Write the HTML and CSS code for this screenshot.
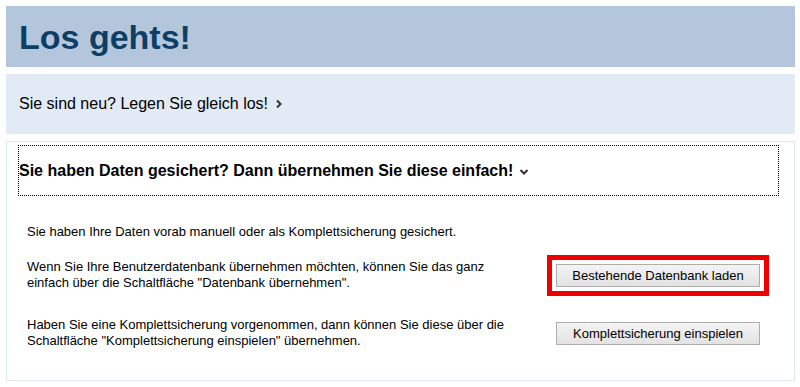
FILE: index.html
```html
<!DOCTYPE html>
<html lang="de">
<head>
<meta charset="utf-8">
<title>Los gehts!</title>
<link rel="stylesheet" href="styles.css">
</head>
<body>
  <header class="hero">
    <h1 class="hero-title">Los gehts!</h1>
  </header>
  <div class="newbar">
    <span>Sie sind neu? Legen Sie gleich los!</span>
    <svg class="chev" width="8" height="10" viewBox="0 0 8 10"><path d="M2 1.5 L5.5 5 L2 8.5" fill="none" stroke="#333" stroke-width="2"/></svg>
  </div>
  <section class="panel">
    <div class="panel-head">
      <span>Sie haben Daten gesichert? Dann übernehmen Sie diese einfach!</span>
      <svg class="chev-down" width="10" height="8" viewBox="0 0 10 8"><path d="M1.5 2 L5 5.5 L8.5 2" fill="none" stroke="#333" stroke-width="2"/></svg>
    </div>
    <div class="panel-body">
      <p class="intro">Sie haben Ihre Daten vorab manuell oder als Komplettsicherung gesichert.</p>
      <div class="row row-db">
        <p class="row-text">Wenn Sie Ihre Benutzerdatenbank übernehmen möchten, können Sie das ganz einfach über die Schaltfläche "Datenbank übernehmen".</p>
        <button class="btn btn-marked">Bestehende Datenbank laden</button>
      </div>
      <div class="row row-full">
        <p class="row-text">Haben Sie eine Komplettsicherung vorgenommen, dann können Sie diese über die Schaltfläche "Komplettsicherung einspielen" übernehmen.</p>
        <button class="btn">Komplettsicherung einspielen</button>
      </div>
    </div>
  </section>
</body>
</html>
```
FILE: styles.css
```css
html, body {
  background: #ffffff;
}
body {
  margin: 6px 5px 6px 6px;
  font-family: "Liberation Sans", Arial, sans-serif;
  color: #000;
}
.hero {
  height: 61px;
  background: #b4c6dc;
  display: flex;
  align-items: center;
  padding-left: 13px;
}
.hero-title {
  margin: 0;
  font-size: 34px;
  font-weight: bold;
  color: #0d3f66;
  line-height: 1;
}
.newbar {
  margin-top: 7px;
  height: 60px;
  background: #e2eaf5;
  display: flex;
  align-items: center;
  padding-left: 13px;
  font-size: 16px;
  gap: 7px;
}
.chev {
  display: block;
}
.panel {
  margin-top: 7px;
  border: 1px solid #dfe7f1;
  padding: 3px 15px 31px 11px;
}
.panel-head {
  height: 49px;
  border: 1px dotted #000;
  display: flex;
  align-items: center;
  padding-left: 0;
  font-size: 16px;
  font-weight: bold;
  gap: 6px;
}
.chev-down {
  display: block;
  margin-top: 2px;
}
.panel-body {
  padding-left: 9px;
  font-size: 13px;
  line-height: 16px;
}
.intro {
  margin: 28px 0 0 0;
}
.row {
  display: grid;
  grid-template-columns: 529px 204px;
  align-items: center;
}
.row-text {
  margin: 0;
  max-width: 496px;
}
.row-db {
  margin-top: 19px;
}
.row-full {
  margin-top: 26px;
}
.btn {
  width: 204px;
  height: 23px;
  padding: 0;
  font-family: "Liberation Sans", Arial, sans-serif;
  font-size: 13px;
  color: #000;
  background: linear-gradient(#f4f4f4, #e2e2e2);
  border: 1px solid #adadad;
  border-radius: 0;
}
.btn-marked {
  outline: 5px solid #ee0000;
  outline-offset: 4px;
}
```
